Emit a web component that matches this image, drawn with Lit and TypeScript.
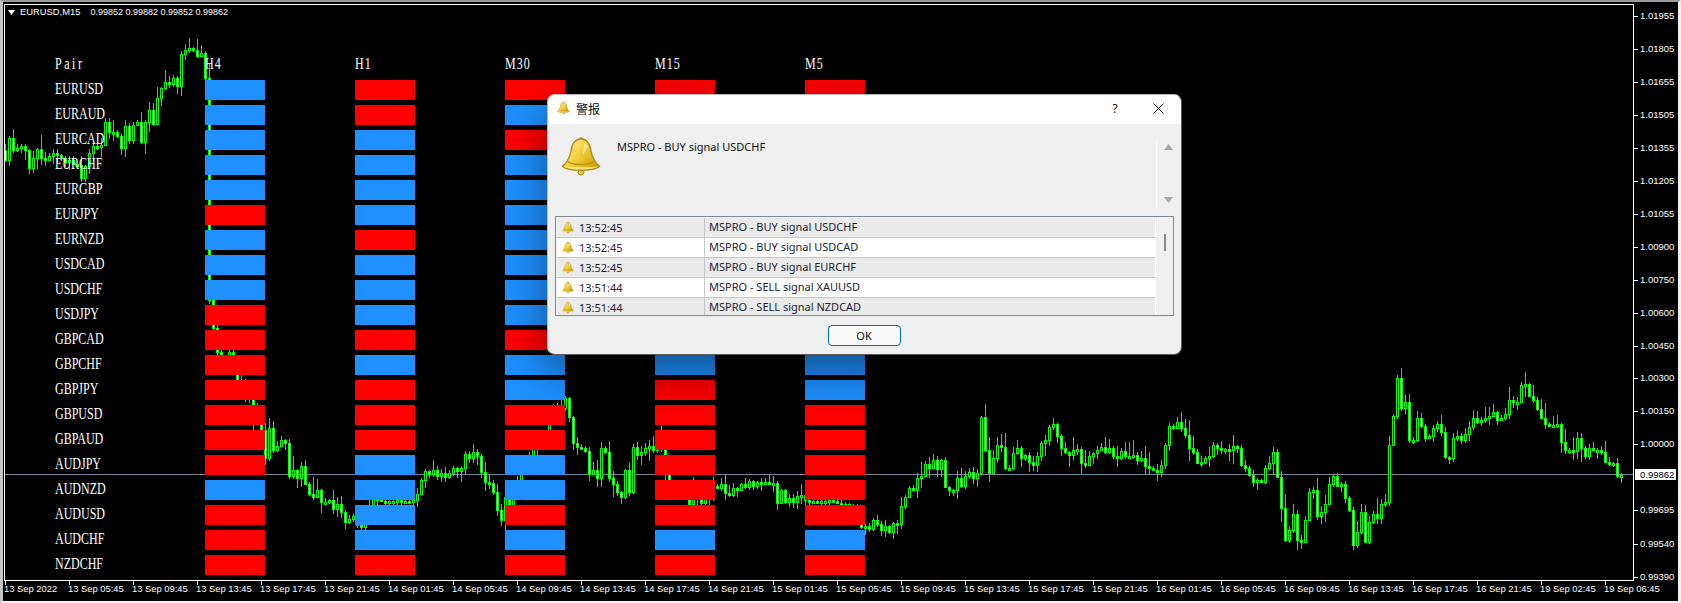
import { LitElement, html, css, svg } from "lit";
import { customElement } from "lit/decorators.js";

const KP: number[][] = [
[5,160],[9,138],[13,150],[18,148],[21,146],[25,150],[29,168],[33,158],[37,149],[41,158],[45,160],[49,156],[53,153],[57,155],[61,158],[64,163],[69,160],[73,164],[77,165],[81,178],[85,166],[89,153],[93,146],[97,147],[102,145],[105,122],[109,132],[113,132],[117,136],[121,148],[125,126],[129,140],[133,125],[137,122],[141,142],[145,122],[149,110],[153,124],[157,98],[161,88],[165,82],[169,84],[173,78],[177,86],[181,54],[185,50],[189,48],[193,50],[197,56],[201,53],[205,78],[209,300],[213,328],[217,352],[221,362],[225,358],[229,352],[233,372],[237,385],[241,380],[245,392],[249,398],[253,415],[257,408],[261,430],
[265,458],[269,428],[273,450],[277,446],[281,440],[285,443],[289,476],[293,470],[297,478],[301,466],[305,484],[309,494],[313,497],[317,490],[321,502],[325,502],[329,500],[333,509],[337,504],[341,512],[345,522],[349,519],[353,516],[357,525],[361,527],[365,516],[369,505],[373,498],[385,502],[397,500],[409,502],[413,500],[417,494],[421,480],[425,471],[429,474],[433,470],[437,476],[441,473],[445,477],[449,473],[453,468],[457,471],[461,468],[465,454],[469,458],[473,452],[477,456],[481,472],[485,482],[489,483],[493,492],[497,510],[501,520],[505,497],[509,505],[513,488],[517,480],[521,470],[525,462],[529,455],[533,440],[537,448],[541,436],[545,442],[549,420],[553,412],[557,405],[561,408],
[565,398],[569,417],[573,443],[577,447],[581,448],[585,451],[589,474],[593,470],[597,478],[601,448],[605,452],[609,478],[613,484],[617,492],[621,497],[625,470],[629,492],[633,447],[637,455],[641,452],[645,448],[649,446],[653,450],[657,438],[661,446],[665,470],[669,485],[673,496],[677,488],[681,492],[685,494],[689,504],[693,491],[697,492],[701,503],[705,495],[709,493],[713,486],[717,488],[721,484],[725,493],[729,495],[733,488],[737,490],[741,484],[745,487],[749,481],[753,486],[757,482],[761,484],[765,482],[769,484],[773,483],[777,503],[781,490],[785,502],[789,498],[793,502],[797,496],[801,495],[805,500],[817,502],[829,500],[841,504],[853,505],[857,520],[861,527],[865,526],[869,529],[873,520],[877,524],[881,530],[885,526],[889,532],[893,523],[897,524],[901,506],[905,497],[909,488],[913,490],[917,478],[921,476],[925,464],[929,468],[933,460],[937,469],[941,460],[945,487],[949,490],[953,490],[957,478],[961,486],[965,476],[969,472],[973,478],[977,473],[981,417],[985,450],[989,473],[993,458],[997,445],
[1001,447],[1005,468],[1009,468],[1013,453],[1017,448],[1021,458],[1025,455],[1029,462],[1033,465],[1037,456],[1041,443],[1045,440],[1049,427],[1053,424],[1057,436],[1061,448],[1065,452],[1069,455],[1073,450],[1077,449],[1081,463],[1085,465],[1089,456],[1093,453],[1097,450],[1101,447],[1105,452],[1109,448],[1113,456],[1117,458],[1121,451],[1125,456],[1129,456],[1133,455],[1137,460],[1141,458],[1145,466],[1149,468],[1153,470],[1157,472],[1161,465],[1165,445],[1169,426],[1173,428],[1177,422],[1181,428],[1185,435],[1189,448],[1193,452],[1197,463],[1201,462],[1205,458],[1209,456],[1213,445],[1217,448],[1221,450],[1225,449],[1229,450],[1233,446],[1237,448],[1241,465],[1245,468],[1249,475],[1253,482],[1257,480],[1261,482],[1265,468],[1269,463],[1273,452],[1277,477],[1281,508],[1285,540],[1289,530],[1293,514],[1297,540],[1301,542],[1305,520],[1309,492],[1313,490],[1317,516],[1321,512],[1325,504],[1329,484],[1333,476],[1337,486],[1341,484],[1345,498],[1349,510],[1353,545],[1357,532],[1361,512],[1365,542],[1369,522],[1373,514],[1377,518],[1381,504],[1385,502],[1389,445],[1393,416],[1397,378],[1401,408],[1405,402],
[1409,440],[1413,440],[1417,418],[1421,426],[1425,438],[1429,436],[1433,428],[1437,424],[1441,432],[1445,457],[1449,458],[1453,438],[1457,436],[1461,440],[1465,434],[1469,427],[1473,418],[1477,422],[1481,420],[1485,418],[1489,416],[1493,412],[1497,420],[1501,418],[1505,414],[1509,400],[1513,402],[1517,402],[1521,385],[1525,384],[1529,396],[1533,400],[1537,409],[1541,418],[1545,424],[1549,426],[1553,425],[1557,424],[1561,442],[1565,450],[1569,450],[1573,451],[1577,438],[1581,448],[1585,456],[1589,448],[1593,450],[1597,450],[1601,452],[1605,462],[1609,464],[1613,463],[1617,476],[1621,475]
];

function rnd(i: number) {
  const s = Math.sin(i * 12.9898 + 4.1) * 43758.5453;
  return s - Math.floor(s);
}

function closeAt(x: number) {
  for (let k = 1; k < KP.length; k++) {
    if (x <= KP[k][0]) {
      const [a, ay] = KP[k - 1], [b, by] = KP[k];
      return ay + ((by - ay) * (x - a)) / (b - a);
    }
  }
  return KP[KP.length - 1][1];
}

function candlePaths() {
  let green = "", white = "", black = "";
  let prev = 150;
  for (let i = 0; i < 405; i++) {
    const x = 5 + 4 * i;
    const c = Math.round(closeAt(x));
    const o = Math.round(prev);
    const top = Math.min(o, c), bot = Math.max(o, c);
    const up = Math.round(rnd(i) * rnd(i + 500) * 17) + 1;
    const dn = Math.round(rnd(i + 900) * rnd(i + 1300) * 15) + 1;
    green += `M${x} ${top - up}h1v${bot - top + up + dn}h-1z`;
    const h = Math.max(2, bot - top);
    green += `M${x - 1} ${top}h3v${h + 1}h-3z`;
    const inner = `M${x} ${top + 1}h1v${h - 1}h-1z`;
    if (c > o) white += inner; else black += inner;
    prev = c;
  }
  return { green, white, black };
}

const bell = (cls: string) => html`<svg class=${cls} viewBox="0 0 40 40">
  <defs><linearGradient id="bg" x1="0" y1="0" x2="1" y2=".7">
    <stop offset="0" stop-color="#fff0a0"/><stop offset=".45" stop-color="#f6d64a"/><stop offset="1" stop-color="#d2a208"/>
  </linearGradient></defs>
  <circle cx="20" cy="36" r="3" fill="#eec63a" stroke="#b08a18"/>
  <circle cx="20" cy="3.5" r="2" fill="#dcb01c" stroke="#b08a18" stroke-width=".6"/>
  <path d="M20 3C13.5 3 11 8 10 15C9 21 6.5 26 1.5 30.5C8 35.5 32 35.5 38.5 30.5C33.5 26 31 21 30 15C29 8 26.5 3 20 3Z" fill="url(#bg)" stroke="#b08a18" stroke-width="1.4"/>
  <path d="M6.5 25.5C12 29.5 28 29.5 33.5 25.5" fill="none" stroke="#b98a00" stroke-width="1.2"/>
  <path d="M2.5 30.5C9 34.5 31 34.5 37.5 30.5C31 31.5 9 31.5 2.5 30.5Z" fill="#fff2a8" opacity=".8"/>
  <path d="M23.5 6.5L27 10.5L22 19Z" fill="#fff" opacity=".5"/>
</svg>`;

const PAIRS = ["EURUSD","EURAUD","EURCAD","EURCHF","EURGBP","EURJPY","EURNZD","USDCAD","USDCHF","USDJPY","GBPCAD","GBPCHF","GBPJPY","GBPUSD","GBPAUD","AUDJPY","AUDNZD","AUDUSD","AUDCHF","NZDCHF"];
const COLS = ["H4","H1","M30","M15","M5"];
const STATE = [
  "BBBBBRBBBRRRRRRRBRRR",
  "RRBBBBRBBBRBRRRBBBBR",
  "RBRBBBBBBBRBBRRBBRBR",
  "RBBBBBBBBBBBRRRRRRBR",
  "RBBBBBBBBBBBBRRRRRBR",
];
const PRICES: [string, number][] = [
  "1.01955","1.01805","1.01655","1.01505","1.01355","1.01205","1.01055","1.00900","1.00750","1.00600","1.00450","1.00300","1.00150","1.00000",
].map((p, i) => [p, 16 + i * 32.95] as [string, number]);
PRICES.push(["0.99695", 510], ["0.99540", 544], ["0.99390", 577]);

const TIMES = ["13 Sep 2022","13 Sep 05:45","13 Sep 09:45","13 Sep 13:45","13 Sep 17:45","13 Sep 21:45",
  "14 Sep 01:45","14 Sep 05:45","14 Sep 09:45","14 Sep 13:45","14 Sep 17:45","14 Sep 21:45",
  "15 Sep 01:45","15 Sep 05:45","15 Sep 09:45","15 Sep 13:45","15 Sep 17:45","15 Sep 21:45",
  "16 Sep 01:45","16 Sep 05:45","16 Sep 09:45","16 Sep 13:45","16 Sep 17:45","16 Sep 21:45",
  "19 Sep 02:45","19 Sep 06:45"];

const ALERTS = [
  ["13:52:45","MSPRO - BUY signal USDCHF"],
  ["13:52:45","MSPRO - BUY signal USDCAD"],
  ["13:52:45","MSPRO - BUY signal EURCHF"],
  ["13:51:44","MSPRO - SELL signal XAUUSD"],
  ["13:51:44","MSPRO - SELL signal NZDCAD"],
];

@customElement("app-root")
export class AppRoot extends LitElement {
  static styles = css`
    :host { display: block; width: 1681px; height: 603px; overflow: hidden; background: #f0f0f0; }
    .canvas { position: relative; width: 1681px; height: 603px; overflow: hidden; background: #000;
      box-sizing: border-box; border-top: 2px solid #9b9b9b; border-left: 3px solid #c4c4c4;
      border-right: 3px solid #f0f0f0; border-bottom: 2px solid #f0f0f0; }
    .layer { position: absolute; left: -3px; top: -2px; width: 1681px; height: 603px; }
    .frame { position: absolute; left: 4px; top: 4px; width: 1628px; height: 575px; border: 1px solid #fff; pointer-events: none; }
    .hline { position: absolute; left: 5px; top: 474px; width: 1628px; height: 1px; background: #778899; }
    .axis { font: 9.4px "Liberation Sans", sans-serif; color: #fff; white-space: nowrap; line-height: 12px; }
    .title { position: absolute; left: 8px; top: 6px; display: flex; align-items: center; gap: 5px; }
    .title svg { width: 7px; height: 5px; }
    .nums { margin-left: 5px; font-size: 9px; }
    .py { position: absolute; left: 1640px; transform: translateY(-6px); font-size: 9.5px; }
    .ty { position: absolute; top: 583px; }
    .tick { position: absolute; background: #fff; }
    .tv { width: 1px; height: 4px; top: 581px; }
    .th { width: 4px; height: 1px; left: 1634px; }
    .cur { position: absolute; left: 1635px; top: 469px; width: 41px; height: 11px; background: #fff; color: #000;
      font-size: 9.5px; line-height: 11px; padding-left: 5px; box-sizing: border-box; }
    .table { position: absolute; left: 55px; top: 55px; }
    .grid { display: grid; grid-template-columns: 150px 60px 90px 60px 90px 60px 90px 60px 90px 60px; row-gap: 5px; grid-auto-rows: 20px; }
    .lbl { font: 16px/18px "Liberation Serif", serif; color: #fff; transform: scaleX(.75); transform-origin: 0 50%; white-space: nowrap; }
    .pair { letter-spacing: 3.4px; }
    .hd { letter-spacing: 1.4px; }
    .bar { height: 20px; }
    .B { background: #1e90ff; }
    .R { background: #ff0000; }
    .dialog { position: absolute; left: 547px; top: 94px; width: 635px; height: 261px; box-sizing: border-box;
      background: #efefef; border-radius: 8px; overflow: hidden; display: flex; flex-direction: column;
      border: 1px solid #5a5a5a; border-top-color: #bbb; border-left-color: #bbb;
      font: 11px "Noto Sans", sans-serif; color: #111; }
    .shadow { position: absolute; left: 547px; top: 94px; width: 635px; height: 261px; border-radius: 8px;
      box-shadow: 0 16px 44px rgba(0,0,0,.46); }
    .tbar { height: 29px; flex: none; background: #fff; display: flex; align-items: center; padding: 0 0 3px 9px; box-sizing: border-box; }
    .tbar .b1 { width: 13px; height: 14px; margin-right: 6px; }
    .tbar .cap { font: 12px "Noto Sans CJK SC", sans-serif; flex: 1; color: #111; }
    .q { font: 12px "Noto Sans", sans-serif; width: 20px; text-align: center; margin-right: 28px; margin-left: -3px; }
    .x { width: 11px; height: 11px; margin-right: 17px; }
    .msg { flex: none; height: 92px; display: flex; padding: 12px 0 0 13px; box-sizing: border-box; }
    .b2 { width: 40px; height: 40px; flex: none; }
    .msg .t { margin-left: 16px; flex: 1; line-height: 15px; padding-top: 3px; }
    .sc { flex: none; width: 24px; margin-top: 4px; margin-right: 1px; height: 68px; border-left: 1px solid #fafafa; display: flex; flex-direction: column; justify-content: space-between; align-items: center; padding: 4px 0 5px; box-sizing: border-box; }
    .sc svg { width: 9px; height: 6px; }
    .list { flex: none; margin: 0 7px; height: 100px; border: 1px solid #808890; box-sizing: border-box; background: #f0f0f0; display: flex; overflow: hidden; padding: 1px 0 0 1px; }
    .rows { width: 598px; flex: none; overflow: hidden; }
    .row { height: 20px; box-sizing: border-box; border-bottom: 1px solid #c6c6c6; display: grid; grid-template-columns: 148px 1fr; background: #fff; line-height: 18px; }
    .row:nth-child(odd) { background: #ebebeb; }
    .c1 { border-right: 1px solid #c6c6c6; display: flex; align-items: center; padding-left: 5px; color: #223; }
    .c1 svg { width: 12px; height: 13px; margin-right: 5px; }
    .c2 { padding-left: 4px; color: #223; }
    .vs { flex: 1; display: flex; justify-content: center; padding-top: 16px; border-left: 1px solid #fff; }
    .thumb { width: 2px; height: 17px; background: #8a8a8a; }
    .foot { flex: 1; display: flex; justify-content: center; align-items: flex-start; padding-top: 9px; padding-right: 1px; }
    .ok { width: 73px; height: 21px; box-sizing: border-box; border: 1px solid #0067c0; border-radius: 4px; background: #f8f8f8;
      font: 11px/19px "Noto Sans", sans-serif; text-align: center; color: #111; }
  `;

  private paths = candlePaths();

  render() {
    const { green, white, black } = this.paths;
    return html`<div class="canvas"><div class="layer">
      <div class="hline"></div>
      <svg width="1681" height="603" style="position:absolute;left:0;top:0" shape-rendering="crispEdges">
        ${svg`<path d=${green} fill="#00ff00"/><path d=${white} fill="#fff"/><path d=${black} fill="#000"/>`}
      </svg>
      <div class="frame"></div>
      <div class="title axis">
        <svg viewBox="0 0 7 5"><polygon points="0,0 7,0 3.5,5" fill="#fff"/></svg>
        <span>EURUSD,M15</span><span class="nums">0.99852 0.99882 0.99852 0.99862</span>
      </div>
      ${PRICES.map(([p, y]) => html`<i class="tick th" style="top:${Math.round(y)}px"></i><span class="axis py" style="top:${Math.round(y)}px">${p}</span>`)}
      <div class="cur axis">0.99862</div>
      ${TIMES.map((t, i) => html`<i class="tick tv" style="left:${5 + 64 * i}px"></i><span class="axis ty" style="left:${4 + 64 * i}px">${t}</span>`)}
      <div class="table">
        <div class="grid">
          <div class="lbl pair">Pair</div>
          ${COLS.map((c, i) => html`<div class="lbl hd">${c}</div>${i < 4 ? html`<div></div>` : ""}`)}
          ${PAIRS.map((p, r) => html`<div class="lbl">${p}</div>
            ${COLS.map((_, c) => html`<div class="bar ${STATE[c][r]}"></div>${c < 4 ? html`<div></div>` : ""}`)}`)}
        </div>
      </div>
      <div class="shadow"></div>
      <div class="dialog">
        <div class="tbar">
          ${bell("b1")}<span class="cap">警报</span>
          <span class="q">?</span>
          <svg class="x" viewBox="0 0 11 11"><path d="M.5.5L10.5 10.5M10.5.5L.5 10.5" stroke="#111" fill="none"/></svg>
        </div>
        <div class="msg">
          ${bell("b2")}
          <div class="t">MSPRO - BUY signal USDCHF</div>
          <div class="sc">
            <svg viewBox="0 0 9 6"><polygon points="4.5,0 9,6 0,6" fill="#a8a8a8"/></svg>
            <svg viewBox="0 0 9 6"><polygon points="0,0 9,0 4.5,6" fill="#a8a8a8"/></svg>
          </div>
        </div>
        <div class="list">
          <div class="rows">
            ${ALERTS.map(([t, m]) => html`<div class="row"><div class="c1">${bell("")}<span>${t}</span></div><div class="c2">${m}</div></div>`)}
          </div>
          <div class="vs"><div class="thumb"></div></div>
        </div>
        <div class="foot"><div class="ok">OK</div></div>
      </div>
    </div></div>`;
  }
}
